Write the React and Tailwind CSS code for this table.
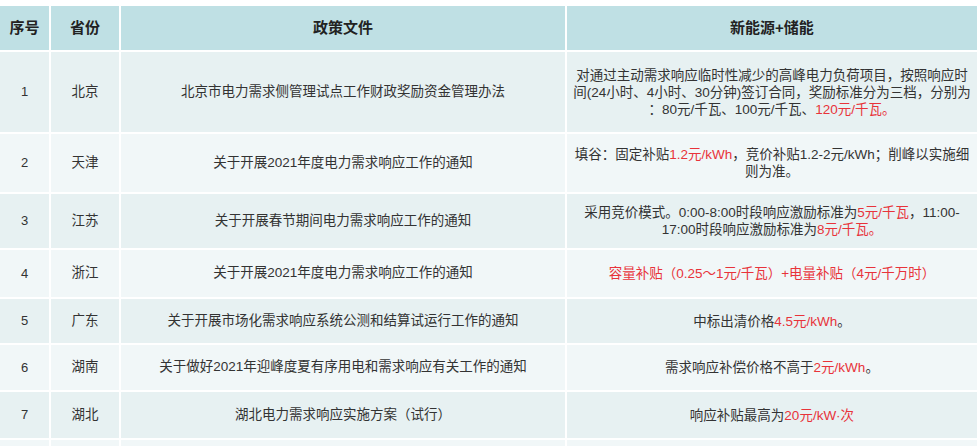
import React from 'react';

const R = ({ children }) => <span className="text-[#e8333a]">{children}</span>;

const rows = [
  {
    no: '1',
    prov: '北京',
    doc: '北京市电力需求侧管理试点工作财政奖励资金管理办法',
    h: 'h-[80px]',
    desc: (
      <>
        对通过主动需求响应临时性减少的高峰电力负荷项目，按照响应时
        <br />
        间(24小时、4小时、30分钟)签订合同，奖励标准分为三档，分别为
        <br />
        ：80元/千瓦、100元/千瓦、<R>120元/千瓦。</R>
      </>
    ),
  },
  {
    no: '2',
    prov: '天津',
    doc: '关于开展2021年度电力需求响应工作的通知',
    h: 'h-[58px]',
    desc: (
      <>
        填谷：固定补贴<R>1.2元/kWh</R>，竞价补贴1.2-2元/kWh；削峰以实施细
        <br />
        则为准。
      </>
    ),
  },
  {
    no: '3',
    prov: '江苏',
    doc: '关于开展春节期间电力需求响应工作的通知',
    h: 'h-[54px]',
    desc: (
      <>
        采用竞价模式。0:00-8:00时段响应激励标准为<R>5元/千瓦</R>，11:00-
        <br />
        17:00时段响应激励标准为<R>8元/千瓦。</R>
      </>
    ),
  },
  {
    no: '4',
    prov: '浙江',
    doc: '关于开展2021年度电力需求响应工作的通知',
    h: 'h-[47px]',
    desc: <R>容量补贴（0.25～1元/千瓦）+电量补贴（4元/千万时）</R>,
  },
  {
    no: '5',
    prov: '广东',
    doc: '关于开展市场化需求响应系统公测和结算试运行工作的通知',
    h: 'h-[44px]',
    desc: (
      <>
        中标出清价格<R>4.5元/kWh</R>。
      </>
    ),
  },
  {
    no: '6',
    prov: '湖南',
    doc: '关于做好2021年迎峰度夏有序用电和需求响应有关工作的通知',
    h: 'h-[45px]',
    desc: (
      <>
        需求响应补偿价格不高于<R>2元/kWh</R>。
      </>
    ),
  },
  {
    no: '7',
    prov: '湖北',
    doc: '湖北电力需求响应实施方案（试行）',
    h: 'h-[46px]',
    desc: (
      <>
        响应补贴最高为<R>20元/kW·次</R>
      </>
    ),
  },
  { no: '', prov: '', doc: '', h: 'h-[46px]', desc: null },
];

export default function App() {
  return (
    <div
      className="w-[977px] h-[446px] overflow-hidden bg-white pt-[6px]"
      style={{ fontFamily: '"Liberation Sans", "Noto Sans CJK SC", sans-serif' }}
    >
      <div className="grid grid-cols-[49px_68px_444px_1fr] gap-[2px] text-[#333]">
        {/* header */}
        {['序号', '省份', '政策文件', '新能源+储能'].map((t) => (
          <div
            key={t}
            className="h-[44px] bg-[#bfe0e4] flex items-center justify-center text-[15px] font-bold text-[#222]"
          >
            {t}
          </div>
        ))}

        {rows.map((r, i) => {
          const bg = i % 2 === 0 ? 'bg-[#e7f1f2]' : 'bg-[#f1f7f8]';
          return (
            <React.Fragment key={i}>
              <div className={`${r.h} ${bg} flex items-center justify-center text-[13px]`}>{r.no}</div>
              <div className={`${r.h} ${bg} flex items-center justify-center text-[13.5px]`}>{r.prov}</div>
              <div className={`${r.h} ${bg} flex items-center justify-center text-[13.5px] whitespace-nowrap`}>
                {r.doc}
              </div>
              <div
                className={`${r.h} ${bg} flex items-center justify-center text-center text-[13.5px] leading-[17px] whitespace-nowrap`}
              >
                <div>{r.desc}</div>
              </div>
            </React.Fragment>
          );
        })}
      </div>
    </div>
  );
}
